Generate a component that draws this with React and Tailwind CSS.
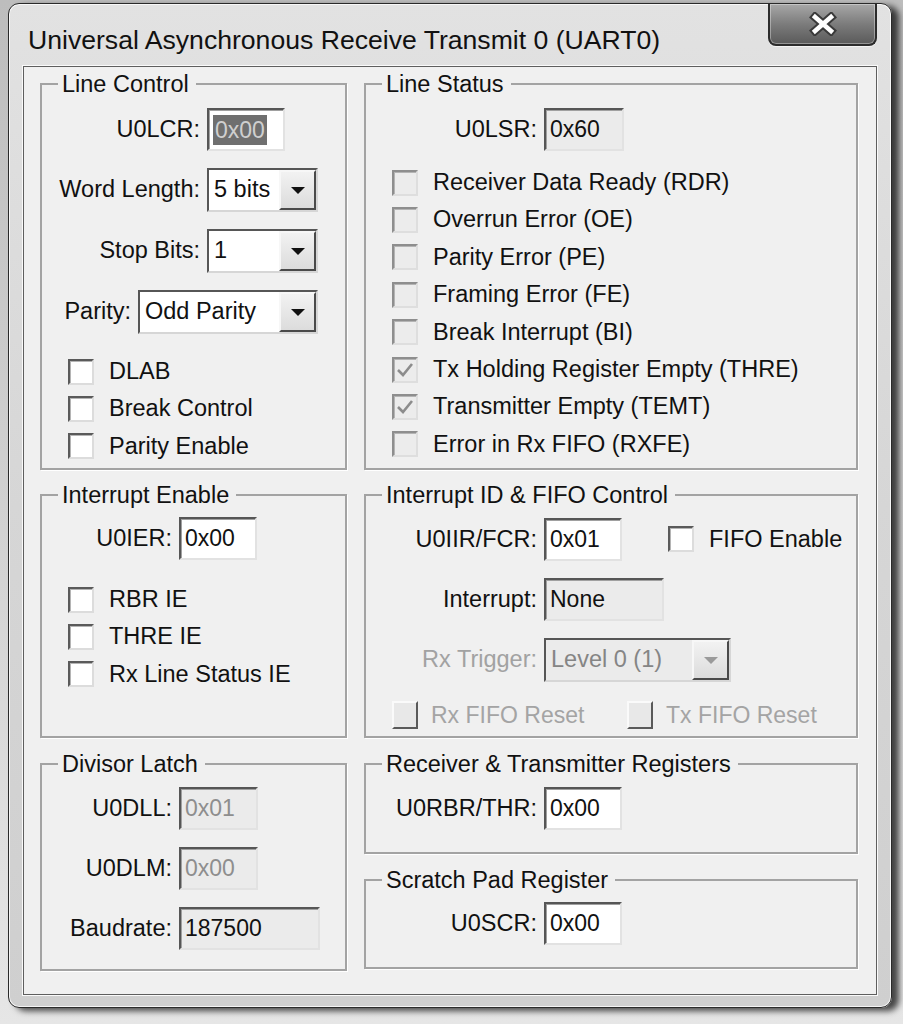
import React from 'react';

const FONT = { fontFamily: '"Liberation Sans", Arial, sans-serif' };

function Group({ title, className, children }) {
  return (
    <fieldset className={`border-2 border-[#a3a3a3] shadow-[1px_1px_0_#ffffff] m-0 p-0 min-w-0 ${className}`}>
      <legend className="ml-[16px] px-[4px] pr-[7px] text-[23.5px] leading-[24px] text-[#111]">{title}</legend>
      {children}
    </fieldset>
  );
}

function Field({ label, labelW, width, value, variant = 'edit', selected, dim }) {
  const bg = variant === 'edit' ? 'bg-white' : 'bg-[#ebebeb]';
  return (
    <div className="flex items-center gap-[7px]">
      <span className={`${labelW} text-right text-[23.5px] text-[#111]`}>{label}</span>
      <div className={`h-[43px] ${width} ${bg} border-2 border-t-[#565656] border-l-[#565656] border-r-[#e2e2e2] border-b-[#e2e2e2] shadow-[inset_1px_1px_0_#a0a0a0] flex items-center pl-[4px]`}>
        {selected ? (
          <span className="bg-[#6f6f6f] text-[#cfcfcf] text-[23px] leading-[30px] px-[2px]">{value}</span>
        ) : (
          <span className={`text-[23px] ${dim ? 'text-[#8e8e8e]' : 'text-[#111]'}`}>{value}</span>
        )}
      </div>
    </div>
  );
}

function Arrow({ dim }) {
  return (
    <svg width="16" height="9" viewBox="0 0 16 9">
      <polygon points="1,1 15,1 8,8" fill={dim ? '#9a9a9a' : '#111'} />
    </svg>
  );
}

function Combo({ label, labelW, width, value, disabled }) {
  return (
    <div className="flex items-center gap-[7px]">
      <span className={`${labelW} text-right text-[23.5px] ${disabled ? 'text-[#a2a2a2]' : 'text-[#111]'}`}>{label}</span>
      <div className={`h-[44px] ${width} flex border-2 border-t-[#565656] border-l-[#565656] border-r-[#d6d6d6] border-b-[#d6d6d6] ${disabled ? 'bg-[#ebebeb]' : 'bg-white'}`}>
        <span className={`flex-1 flex items-center pl-[5px] text-[23.5px] ${disabled ? 'text-[#858585]' : 'text-[#111]'}`}>{value}</span>
        <span className="w-[37px] flex items-center justify-center bg-gradient-to-b from-[#f2f2f2] to-[#dcdcdc] border-2 border-t-[#f7f7f7] border-l-[#f7f7f7] border-r-[#4a4a4a] border-b-[#4a4a4a]">
          <Arrow dim={disabled} />
        </span>
      </div>
    </div>
  );
}

function Check({ label, checked, disabled }) {
  return (
    <div className="flex items-center h-[37.4px]">
      <span
        className={`w-[26px] h-[26px] flex items-center justify-center border-2 ${
          disabled
            ? 'bg-[#ececec] border-t-[#8e8e8e] border-l-[#8e8e8e] border-r-[#dedede] border-b-[#dedede]'
            : 'bg-white border-t-[#5a5a5a] border-l-[#5a5a5a] border-r-[#dcdcdc] border-b-[#dcdcdc]'
        } shadow-[inset_1px_1px_0_#b4b4b4]`}
      >
        {checked && (
          <svg width="18" height="16" viewBox="0 0 18 16">
            <polyline points="2,8 7,13 16,2" fill="none" stroke="#8c8c8c" strokeWidth="2.6" />
          </svg>
        )}
      </span>
      <span className="ml-[15px] text-[23.5px] text-[#111] whitespace-nowrap">{label}</span>
    </div>
  );
}

function PushCheck({ label }) {
  return (
    <div className="flex items-center">
      <span className="w-[26px] h-[28px] bg-[#e8e8e8] border-2 border-t-[#fafafa] border-l-[#fafafa] border-r-[#5a5a5a] border-b-[#5a5a5a]" />
      <span className="ml-[13px] text-[23px] text-[#a4a4a4] whitespace-nowrap">{label}</span>
    </div>
  );
}

function CloseButton() {
  return (
    <div className="ml-auto mr-[14px] w-[109px] h-[42px] rounded-b-[8px] border-2 border-t-0 border-[#2c2c2c] bg-gradient-to-b from-[#a8a8a8] via-[#7c7c7c] to-[#5a5a5a] shadow-[inset_0_0_0_1px_rgba(255,255,255,0.35),0_1px_0_#f4f4f4] flex items-center justify-center">
      <svg width="30" height="24" viewBox="0 0 30 24">
        <path d="M7 5 L23 19 M23 5 L7 19" stroke="#3a3a3a" strokeWidth="8.5" strokeLinecap="square" />
        <path d="M7 5 L23 19 M23 5 L7 19" stroke="#ffffff" strokeWidth="4.5" strokeLinecap="square" />
      </svg>
    </div>
  );
}

export default function App() {
  return (
    <div className="w-[903px] h-[1024px] overflow-hidden bg-gradient-to-b from-[#bdbdbd] to-[#e6e6e6] pl-[8px] pt-[3px]" style={FONT}>
      <div className="w-[884px] h-[1005px] rounded-[11px] border border-[#2a2a2a] bg-gradient-to-b from-[#e2e2e2] via-[#d6d6d6] to-[#cfcfcf] shadow-[inset_0_0_0_1px_rgba(255,255,255,0.75),7px_3px_6px_rgba(0,0,0,0.7)] flex flex-col">
        <div className="h-[62px] flex items-start">
          <span className="mt-[21px] ml-[19px] text-[26.6px] leading-[30px] text-[#111] whitespace-nowrap">
            Universal Asynchronous Receive Transmit 0 (UART0)
          </span>
          <CloseButton />
        </div>

        <div className="mx-[14px] h-[929px] bg-[#f0f0f0] border border-[#5e5e5e] shadow-[0_0_0_1px_#fafafa] pl-[16px] pt-[5px]">
          <div className="grid grid-cols-[307px_494px] gap-x-[17px]">
            {/* row 1 */}
            <Group title="Line Control" className="h-[398px]">
              <div className="pt-[12px] flex flex-col gap-[17px]">
                <Field label="U0LCR:" labelW="w-[158px]" width="w-[78px]" value="0x00" selected />
                <Combo label="Word Length:" labelW="w-[158px]" width="w-[111px]" value="5 bits" />
                <Combo label="Stop Bits:" labelW="w-[158px]" width="w-[111px]" value="1" />
                <Combo label="Parity:" labelW="w-[89px]" width="w-[180px]" value="Odd Parity" />
              </div>
              <div className="pl-[26px] mt-[19px]">
                <Check label="DLAB" />
                <Check label="Break Control" />
                <Check label="Parity Enable" />
              </div>
            </Group>

            <Group title="Line Status" className="h-[398px]">
              <div className="pt-[12px]">
                <Field label="U0LSR:" labelW="w-[171px]" width="w-[80px]" value="0x60" variant="ro" />
              </div>
              <div className="pl-[26px] mt-[13px]">
                <Check label="Receiver Data Ready (RDR)" disabled />
                <Check label="Overrun Error (OE)" disabled />
                <Check label="Parity Error (PE)" disabled />
                <Check label="Framing Error (FE)" disabled />
                <Check label="Break Interrupt (BI)" disabled />
                <Check label="Tx Holding Register Empty (THRE)" disabled checked />
                <Check label="Transmitter Empty (TEMT)" disabled checked />
                <Check label="Error in Rx FIFO (RXFE)" disabled />
              </div>
            </Group>

            {/* row 2 */}
            <Group title="Interrupt Enable" className="h-[255px] mt-[13px]">
              <div className="pt-[10px]">
                <Field label="U0IER:" labelW="w-[130px]" width="w-[78px]" value="0x00" />
              </div>
              <div className="pl-[26px] mt-[21px]">
                <Check label="RBR IE" />
                <Check label="THRE IE" />
                <Check label="Rx Line Status IE" />
              </div>
            </Group>

            <Group title="Interrupt ID & FIFO Control" className="h-[255px] mt-[13px]">
              <div className="pt-[11px] flex flex-col gap-[17px]">
                <div className="flex items-center">
                  <Field label="U0IIR/FCR:" labelW="w-[171px]" width="w-[78px]" value="0x01" />
                  <div className="ml-[46px]">
                    <Check label="FIFO Enable" />
                  </div>
                </div>
                <Field label="Interrupt:" labelW="w-[171px]" width="w-[120px]" value="None" variant="ro" />
                <Combo label="Rx Trigger:" labelW="w-[171px]" width="w-[187px]" value="Level 0 (1)" disabled />
              </div>
              <div className="pl-[26px] mt-[16px] flex items-center">
                <div className="w-[235px]">
                  <PushCheck label="Rx FIFO Reset" />
                </div>
                <PushCheck label="Tx FIFO Reset" />
              </div>
            </Group>

            {/* row 3 */}
            <Group title="Divisor Latch" className="h-[219px] mt-[14px]">
              <div className="pt-[11px] flex flex-col gap-[17px]">
                <Field label="U0DLL:" labelW="w-[130px]" width="w-[79px]" value="0x01" variant="ro" dim />
                <Field label="U0DLM:" labelW="w-[130px]" width="w-[79px]" value="0x00" variant="ro" dim />
                <Field label="Baudrate:" labelW="w-[130px]" width="w-[141px]" value="187500" variant="ro" />
              </div>
            </Group>

            <div className="mt-[14px] flex flex-col gap-[14px]">
              <Group title="Receiver & Transmitter Registers" className="h-[102px]">
                <div className="pt-[11px]">
                  <Field label="U0RBR/THR:" labelW="w-[171px]" width="w-[78px]" value="0x00" />
                </div>
              </Group>
              <Group title="Scratch Pad Register" className="h-[101px]">
                <div className="pt-[10px]">
                  <Field label="U0SCR:" labelW="w-[171px]" width="w-[78px]" value="0x00" />
                </div>
              </Group>
            </div>
          </div>
        </div>
      </div>
    </div>
  );
}
